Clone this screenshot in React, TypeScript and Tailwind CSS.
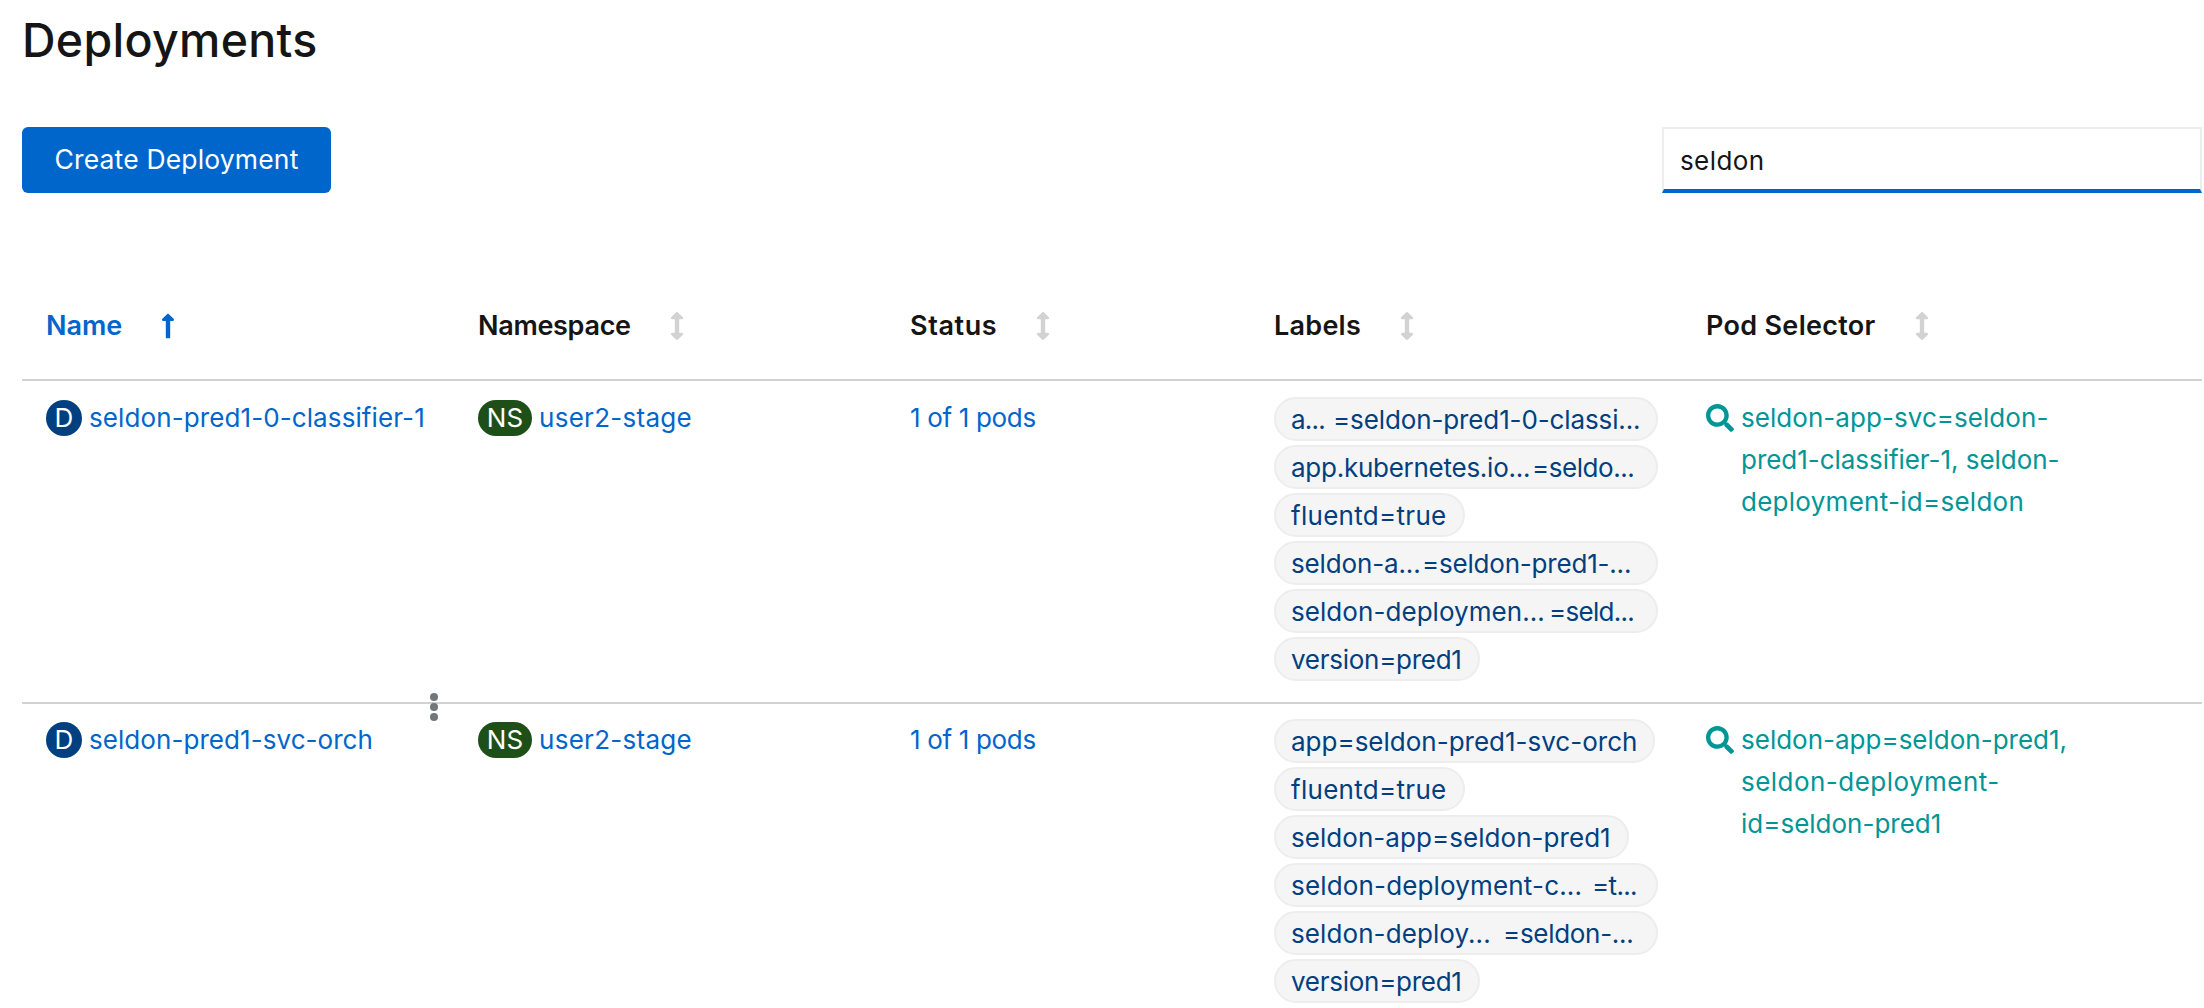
import React from "react";
import { FaArrowsAltV, FaLongArrowAltUp, FaSearch } from "react-icons/fa";

type Label = { name: string; value?: string; nameClass: string; valueClass?: string; pillClass: string };

type Deployment = {
  name: string;
  nameClass: string;
  namespace: string;
  status: string;
  labels: Label[];
  selector: { text: string; className: string }[];
};

const deployments: Deployment[] = [
  {
    name: "seldon-pred1-0-classifier-1",
    nameClass: "tracking-[0.1px]",
    namespace: "user2-stage",
    status: "1 of 1 pods",
    labels: [
      { name: "a...", value: "=seldon-pred1-0-classi...", nameClass: "w-[42px] tracking-[-0.8px]", valueClass: "tracking-[-0.12px]", pillClass: "w-96" },
      { name: "app.kubernetes.io...", value: "=seldo...", nameClass: "w-[241px] tracking-[-0.26px]", valueClass: "tracking-[-0.46px]", pillClass: "w-96" },
      { name: "fluentd=true", nameClass: "tracking-[0.29px]", pillClass: "w-[191px]" },
      { name: "seldon-a...", value: "=seldon-pred1-...", nameClass: "w-[131px] tracking-[-0.14px]", valueClass: "tracking-[-0.2px]", pillClass: "w-96" },
      { name: "seldon-deploymen...", value: "=seld...", nameClass: "w-[258px] tracking-[0.06px]", valueClass: "tracking-[-0.73px]", pillClass: "w-96" },
      { name: "version=pred1", nameClass: "tracking-[-0.27px]", pillClass: "w-[206px]" },
    ],
    selector: [
      { text: "seldon-app-svc=seldon-", className: "tracking-[0.05px]" },
      { text: "pred1-classifier-1, seldon-", className: "tracking-[-0.04px]" },
      { text: "deployment-id=seldon", className: "tracking-[0.27px]" },
    ],
  },
  {
    name: "seldon-pred1-svc-orch",
    nameClass: "tracking-[0.06px]",
    namespace: "user2-stage",
    status: "1 of 1 pods",
    labels: [
      { name: "app=seldon-pred1-svc-orch", nameClass: "tracking-normal", pillClass: "w-[381px]" },
      { name: "fluentd=true", nameClass: "tracking-[0.29px]", pillClass: "w-[191px]" },
      { name: "seldon-app=seldon-pred1", nameClass: "tracking-[0.05px]", pillClass: "w-[355px]" },
      { name: "seldon-deployment-c...", value: "=t...", nameClass: "w-[301px] tracking-[0.16px]", valueClass: "tracking-[-0.65px]", pillClass: "w-96" },
      { name: "seldon-deploy...", value: "=seldon-...", nameClass: "w-[212px] tracking-[0.09px]", valueClass: "tracking-[-0.3px]", pillClass: "w-96" },
      { name: "version=pred1", nameClass: "tracking-[-0.27px]", pillClass: "w-[206px]" },
    ],
    selector: [
      { text: "seldon-app=seldon-pred1,", className: "tracking-normal" },
      { text: "seldon-deployment-", className: "tracking-[0.47px]" },
      { text: "id=seldon-pred1", className: "tracking-normal" },
    ],
  },
];

const columns = [
  { title: "Name", className: "tracking-normal", sorted: true },
  { title: "Namespace", className: "tracking-[-0.3px]" },
  { title: "Status", className: "tracking-[0.6px]" },
  { title: "Labels", className: "tracking-[0.26px]" },
  { title: "Pod Selector", className: "tracking-[0.3px]" },
];

function HeaderCell({ title, className, sorted }: { title: string; className: string; sorted?: boolean }) {
  return (
    <div className={`flex items-center ${sorted ? "text-[#0066cc]" : "text-[#151515]"}`}>
      <span className={className}>{title}</span>
      {sorted ? (
        <FaLongArrowAltUp className="ml-[39px] h-7 w-[14px]" />
      ) : (
        <FaArrowsAltV className="ml-[39px] h-7 w-[14px] text-[#d2d2d2]" />
      )}
    </div>
  );
}

function LabelPill({ name, value, nameClass, valueClass, pillClass }: Label) {
  return (
    <div className={`flex h-11 items-center rounded-full border-2 border-[#ededed] bg-[#f5f5f5] pl-[15px] pt-px whitespace-pre text-[#004080] ${pillClass}`}>
      <span className={`shrink-0 ${nameClass}`}>{name}</span>
      {value && <span className={valueClass}>{value}</span>}
    </div>
  );
}

function Row({ item, first }: { item: Deployment; first: boolean }) {
  return (
    <div
      className={`grid grid-cols-[432px_432px_364px_432px_1fr] pl-6 text-[26px] leading-[42px] ${
        first ? "h-[323px] border-b-2 border-[#d2d2d2] pt-4" : "pt-[15px]"
      }`}
    >
      <div className="flex h-[42px] items-center text-[#0066cc]">
        <span className="flex size-9 items-center justify-center rounded-full bg-[#004080] text-white">D</span>
        <a className={`ml-[7px] whitespace-nowrap ${item.nameClass}`}>{item.name}</a>
      </div>
      <div className="flex h-[42px] items-center text-[#0066cc]">
        <span className="flex h-9 w-[54px] items-center justify-center rounded-full bg-[#1e4f18] text-white">NS</span>
        <a className="ml-[7px] tracking-[0.28px]">{item.namespace}</a>
      </div>
      <div className="text-[#0066cc] tracking-[-0.33px]">{item.status}</div>
      <div className="flex flex-col items-start gap-1">
        {item.labels.map((label) => (
          <LabelPill key={label.name} {...label} />
        ))}
      </div>
      <div className="flex items-start text-[#009596]">
        <FaSearch className="mt-[7px] size-7 shrink-0" />
        <a className="ml-[7px] flex flex-col whitespace-nowrap">
          {item.selector.map((line) => (
            <span key={line.text} className={line.className}>
              {line.text}
            </span>
          ))}
        </a>
      </div>
      <button className="mt-3 mr-10 flex flex-col gap-0.5 self-start justify-self-end">
        <span className="size-2 rounded-full bg-[#72767b]" />
        <span className="size-2 rounded-full bg-[#72767b]" />
        <span className="size-2 rounded-full bg-[#72767b]" />
      </button>
    </div>
  );
}

export default function App() {
  return (
    <main className="h-[1008px] w-[2204px] overflow-hidden bg-white pl-[22px] pr-0.5 font-['Inter',sans-serif] text-[#151515]">
      <h1 className="text-[46.5px] leading-[80px] font-medium tracking-[0.3px]">Deployments</h1>
      <div className="mt-[47px] flex items-center justify-between">
        <button className="h-[66px] w-[309px] rounded-md bg-[#0066cc] text-[26.5px] tracking-[0.16px] text-white">
          Create Deployment
        </button>
        <input
          className="h-[66px] w-[540px] border-2 border-b-4 border-[#ededed] border-b-[#0066cc] bg-white pt-0.5 pl-4 text-[26px] tracking-[0.4px] outline-none"
          defaultValue="seldon"
        />
      </div>
      <section className="mt-20">
        <div className="grid grid-cols-[432px_432px_364px_432px_1fr] border-b-2 border-[#d2d2d2] py-8 pl-6 text-[27px] leading-[42px] font-semibold">
          {columns.map((column) => (
            <HeaderCell key={column.title} {...column} />
          ))}
        </div>
        {deployments.map((item, i) => (
          <Row key={item.name} item={item} first={i === 0} />
        ))}
      </section>
    </main>
  );
}
